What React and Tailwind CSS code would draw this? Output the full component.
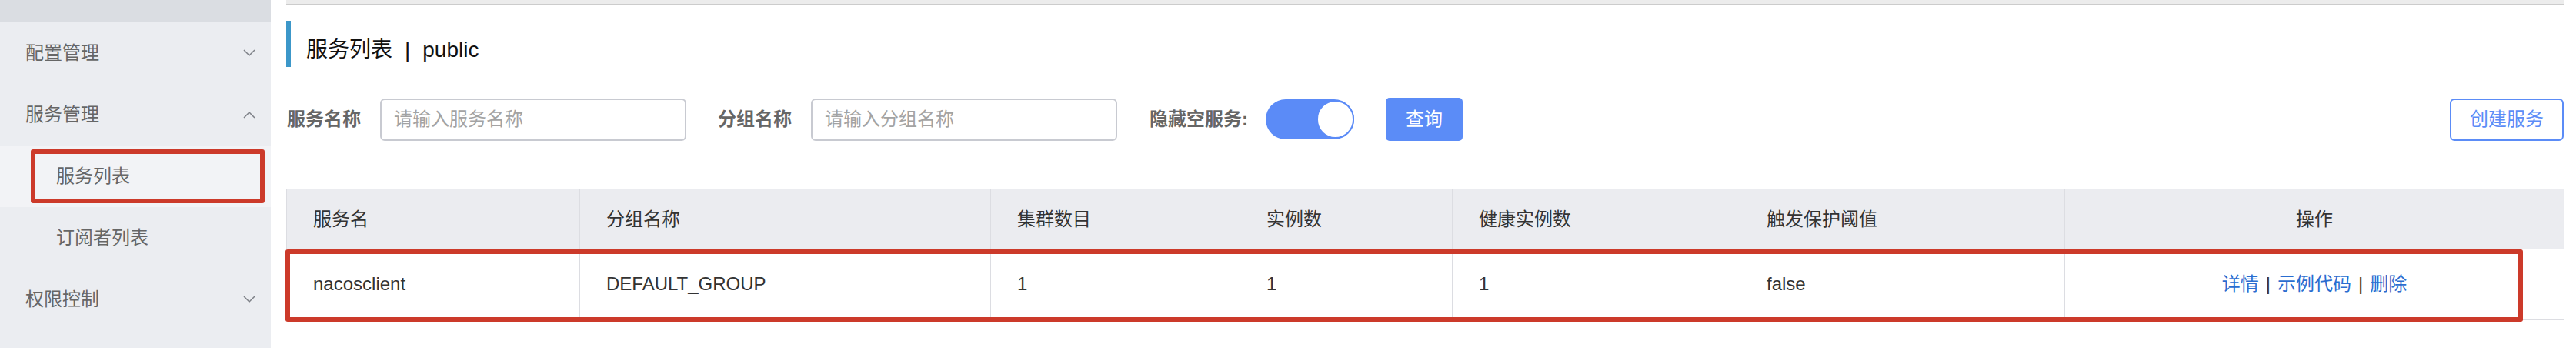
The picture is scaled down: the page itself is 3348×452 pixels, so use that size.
import React from 'react';

const FONT = "font-['Liberation_Sans','Noto_Sans_CJK_SC',sans-serif]";

const Chevron = ({ up }) => (
    <svg width="16" height="10" viewBox="0 0 16 10" className="text-[#7d8087]">
        <polyline
            points={up ? '1,9 8,2 15,9' : '1,1 8,8 15,1'}
            fill="none"
            stroke="currentColor"
            strokeWidth="1.5"
        />
    </svg>
);

const Sidebar = () => (
    <div className="w-[352px] h-[452px] bg-[#ebedf1] shrink-0 flex flex-col text-[24px] text-[#666]">
        <div className="h-[29px] bg-[#dadde2]" />
        <div className="h-[80px] flex items-center justify-between pl-[33px] pr-[20px]">
            <span>配置管理</span>
            <Chevron />
        </div>
        <div className="h-[80px] flex items-center justify-between pl-[33px] pr-[20px]">
            <span>服务管理</span>
            <Chevron up />
        </div>
        <div className="relative h-[80px] flex items-center pl-[73px] bg-[#f2f3f6]">
            <span>服务列表</span>
            <div className="absolute left-[40px] top-[5px] w-[304px] h-[70px] border-[6px] border-[#cc3a2a] rounded-[3px]" />
        </div>
        <div className="h-[80px] flex items-center pl-[73px]">
            <span>订阅者列表</span>
        </div>
        <div className="h-[80px] flex items-center justify-between pl-[33px] pr-[20px]">
            <span>权限控制</span>
            <Chevron />
        </div>
    </div>
);

const columns = [
    { title: '服务名', value: 'nacosclient' },
    { title: '分组名称', value: 'DEFAULT_GROUP' },
    { title: '集群数目', value: '1' },
    { title: '实例数', value: '1' },
    { title: '健康实例数', value: '1' },
    { title: '触发保护阈值', value: 'false' },
];

const App = () => {
    return (
        <div className={`flex w-[3348px] h-[452px] bg-white overflow-hidden ${FONT}`}>
            <Sidebar />
            <div className="ml-[20px] w-[2960px] flex flex-col">
                <div className="h-[7px] bg-[#ececec] border-b-2 border-[#cccccc]" />

                {/* titulo */}
                <div className="mt-[20px] h-[60px] border-l-[6px] border-[#3c97c9] flex items-center pl-[20px]">
                    <span className="mt-[16px] text-[28px] text-[#111] leading-none">
                        服务列表<span className="mx-[16px]">|</span>public
                    </span>
                </div>

                {/* filtros */}
                <div className="mt-[40px] h-[56px] flex items-center">
                    <label className="text-[24px] font-bold text-[#666] ml-[1px] mr-[25px]">服务名称</label>
                    <input
                        type="text"
                        placeholder="请输入服务名称"
                        className="w-[398px] h-[55px] border-2 border-[#c8cad1] rounded-[6px] pl-[16px] text-[24px] placeholder:text-[#a3a3a3] outline-none mr-[41px]"
                    />
                    <label className="text-[24px] font-bold text-[#666] mr-[25px]">分组名称</label>
                    <input
                        type="text"
                        placeholder="请输入分组名称"
                        className="w-[398px] h-[55px] border-2 border-[#c8cad1] rounded-[6px] pl-[16px] text-[24px] placeholder:text-[#a3a3a3] outline-none mr-[42px]"
                    />
                    <label className="text-[24px] font-bold text-[#666] mr-[23px]">隐藏空服务:</label>
                    <div className="w-[115px] h-[52px] rounded-full bg-[#5b8bf7] flex items-center justify-end mr-[41px]">
                        <div className="w-[49px] h-[50px] rounded-full bg-white border-2 border-[#5b8bf7]" />
                    </div>
                    <button className="w-[100px] h-[56px] bg-[#5b8cf7] rounded-[5px] text-white text-[24px]">查询</button>
                    <div className="flex-1" />
                    <button className="w-[148px] h-[55px] border-2 border-[#5b8cf7] rounded-[6px] text-[#5b8cf7] text-[24px]">
                        创建服务
                    </button>
                </div>

                {/* tabla */}
                <div className="relative mt-[62px]">
                    <div className="grid grid-cols-[381px_534px_324px_276px_374px_422px_649px] border-t border-l border-[#dcdde2] text-[24px] text-[#333]">
                        {columns.map((c) => (
                            <div key={c.title} className="h-[78px] bg-[#ebecf0] border-r border-b border-[#dcdde2] flex items-center pl-[34px]">
                                {c.title}
                            </div>
                        ))}
                        <div className="h-[78px] bg-[#ebecf0] border-r border-b border-[#dcdde2] flex items-center justify-center">
                            操作
                        </div>
                        {columns.map((c) => (
                            <div key={c.value + c.title} className="h-[91px] border-r border-b border-[#dcdde2] flex items-center pl-[34px]">
                                {c.value}
                            </div>
                        ))}
                        <div className="h-[91px] border-r border-b border-[#dcdde2] flex items-center justify-center">
                            <a className="text-[#2a6dd0]">详情</a>
                            <span className="mx-[9px]">|</span>
                            <a className="text-[#2a6dd0]">示例代码</a>
                            <span className="mx-[9px]">|</span>
                            <a className="text-[#2a6dd0]">删除</a>
                        </div>
                    </div>
                    <div className="absolute left-[-1px] top-[79px] w-[2908px] h-[94px] border-[6px] border-[#cc3a2a] rounded-[3px]" />
                </div>
            </div>
        </div>
    );
};

export default App;
